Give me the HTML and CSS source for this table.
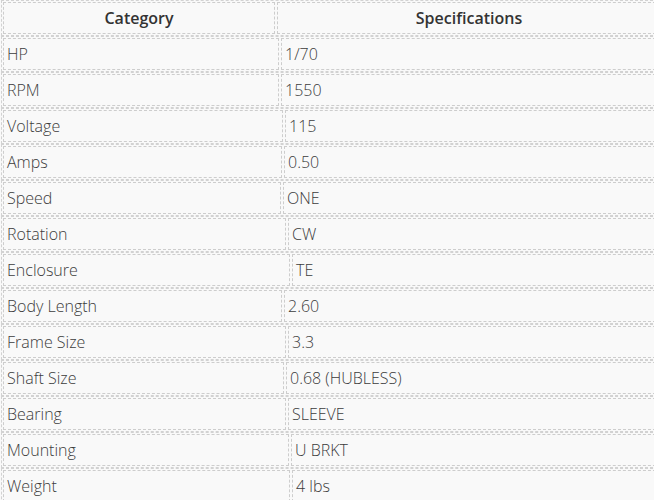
FILE: index.html
```html
<!DOCTYPE html>
<html lang="en">
<head>
<meta charset="utf-8">
<title>Specifications</title>
<link rel="stylesheet" href="styles.css">
</head>
<body>
<div class="spec-table">
  <div class="row head"><div class="cell c1">Category</div><div class="cell c2">Specifications</div></div>
  <div class="row"><div class="cell c1">HP</div><div class="cell c2">1/70</div></div>
  <div class="row"><div class="cell c1">RPM</div><div class="cell c2">1550</div></div>
  <div class="row"><div class="cell c1">Voltage</div><div class="cell c2">115</div></div>
  <div class="row"><div class="cell c1">Amps</div><div class="cell c2">0.50</div></div>
  <div class="row"><div class="cell c1">Speed</div><div class="cell c2">ONE</div></div>
  <div class="row"><div class="cell c1">Rotation</div><div class="cell c2">CW</div></div>
  <div class="row"><div class="cell c1">Enclosure</div><div class="cell c2">TE</div></div>
  <div class="row"><div class="cell c1">Body Length</div><div class="cell c2">2.60</div></div>
  <div class="row"><div class="cell c1">Frame Size</div><div class="cell c2">3.3</div></div>
  <div class="row"><div class="cell c1">Shaft Size</div><div class="cell c2">0.68 (HUBLESS)</div></div>
  <div class="row"><div class="cell c1">Bearing</div><div class="cell c2">SLEEVE</div></div>
  <div class="row"><div class="cell c1">Mounting</div><div class="cell c2">U BRKT</div></div>
  <div class="row"><div class="cell c1">Weight</div><div class="cell c2">4 lbs</div></div>
</div>
</body>
</html>
```
FILE: styles.css
```css
html, body {
  margin: 0;
  padding: 0;
  overflow: hidden;
  background: #f9f9f9;
}
body {
  font-family: "Open Sans", "Noto Sans", sans-serif;
  font-size: 16px;
  font-weight: 300;
  color: #3c3c3c;
}
.spec-table {
  width: 662px;
  margin: 0 0 0 1px;
  display: flex;
  flex-direction: column;
}
.row {
  display: flex;
  gap: 2px;
  padding: 1px;
  border: 1px dashed #d2d2d2;
}
.cell {
  box-sizing: border-box;
  height: 32px;
  border: 1px dashed #cdcdcd;
  padding: 0 3px;
  display: flex;
  align-items: center;
  white-space: nowrap;
}
.c2 { flex: 1; }
.head .cell {
  justify-content: center;
  font-weight: 600;
  color: #333;
}
.row:nth-child(1) .c1 { width: 272px; }
.row:nth-child(2) .c1 { width: 276px; }
.row:nth-child(3) .c1 { width: 276px; }
.row:nth-child(4) .c1 { width: 280px; }
.row:nth-child(5) .c1 { width: 279px; }
.row:nth-child(6) .c1 { width: 278px; }
.row:nth-child(7) .c1 { width: 283px; }
.row:nth-child(8) .c1 { width: 287px; }
.row:nth-child(9) .c1 { width: 279px; }
.row:nth-child(10) .c1 { width: 283px; }
.row:nth-child(11) .c1 { width: 281px; }
.row:nth-child(12) .c1 { width: 283px; }
.row:nth-child(13) .c1 { width: 286px; }
.row:nth-child(14) .c1 { width: 287px; }
```
